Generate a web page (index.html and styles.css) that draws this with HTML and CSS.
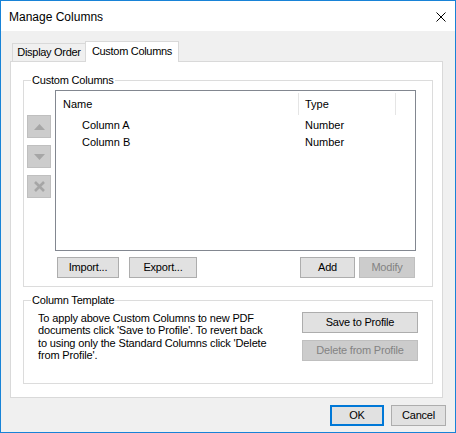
FILE: index.html
```html
<!DOCTYPE html>
<html lang="en">
<head>
<meta charset="utf-8">
<title>Manage Columns</title>
<link rel="stylesheet" href="styles.css">
</head>
<body>
<div class="window">
  <div class="titlebar">
    <span class="title">Manage Columns</span>
    <svg class="close" width="10" height="10" viewBox="0 0 10 10"><path d="M0.5 0.5 L9.5 9.5 M9.5 0.5 L0.5 9.5" stroke="#000" stroke-width="1" fill="none"/></svg>
  </div>
  <div class="client">
    <div class="tabs">
      <div class="tab">Display Order</div>
      <div class="tab active">Custom Columns</div>
    </div>
    <div class="panel">
      <fieldset class="group group-columns">
        <legend>Custom Columns</legend>
        <div class="columns-body">
          <div class="movers">
            <div class="mover"><svg width="11" height="6" viewBox="0 0 11 6"><path d="M5.5 0 L11 6 L0 6 Z" fill="#a6a6a6"/></svg></div>
            <div class="mover"><svg width="11" height="6" viewBox="0 0 11 6"><path d="M0 0 L11 0 L5.5 6 Z" fill="#a6a6a6"/></svg></div>
            <div class="mover"><svg width="11" height="11" viewBox="0 0 11 11"><path d="M1 1 L10 10 M10 1 L1 10" stroke="#a6a6a6" stroke-width="2.6" fill="none"/></svg></div>
          </div>
          <div class="list">
            <div class="list-head">
              <div class="hcell c-name">Name</div>
              <div class="hcell c-type">Type</div>
            </div>
            <div class="rows">
              <div class="row"><div class="cell c-name indent">Column A</div><div class="cell c-type">Number</div></div>
              <div class="row"><div class="cell c-name indent">Column B</div><div class="cell c-type">Number</div></div>
            </div>
          </div>
        </div>
        <div class="list-actions">
          <button class="btn btn-import">Import...</button>
          <button class="btn btn-export">Export...</button>
          <span class="spacer"></span>
          <button class="btn btn-add">Add</button>
          <button class="btn btn-modify" disabled>Modify</button>
        </div>
      </fieldset>
      <fieldset class="group group-template">
        <legend>Column Template</legend>
        <div class="template-body">
          <p class="template-text">To apply above Custom Columns to new PDF<br>documents click 'Save to Profile'. To revert back<br>to using only the Standard Columns click 'Delete<br>from Profile'.</p>
          <div class="profile-btns">
            <button class="btn btn-profile">Save to Profile</button>
            <button class="btn btn-profile" disabled>Delete from Profile</button>
          </div>
        </div>
      </fieldset>
    </div>
    <div class="footer">
      <button class="btn btn-ok">OK</button>
      <button class="btn btn-cancel">Cancel</button>
    </div>
  </div>
</div>
</body>
</html>
```
FILE: styles.css
```css
* { box-sizing: border-box; }
html, body { margin: 0; padding: 0; }
body {
  font-family: "Liberation Sans", Arial, sans-serif;
  font-size: 11px;
  color: #000;
  background: #fff;
}
.window {
  width: 456px;
  height: 433px;
  border: 1px solid #1883d7;
  background: #f0f0f0;
  display: flex;
  flex-direction: column;
}
.titlebar {
  height: 30px;
  background: #fff;
  display: flex;
  align-items: center;
  padding: 2px 9px 0 8px;
  flex: none;
}
.title {
  font-size: 12px;
  flex: 1;
}
.close { display: block; margin-top: -1px; }
.client {
  flex: 1;
  display: flex;
  flex-direction: column;
}
.tabs {
  display: flex;
  align-items: flex-end;
  height: 20px;
  margin: 10px 0 0 11px;
}
.tab {
  height: 18px;
  width: 74px;
  border: 1px solid #d9d9d9;
  border-bottom: none;
  background: #f0f0f0;
  text-align: center;
  line-height: 16px;
  letter-spacing: -0.3px;
}
.tab.active {
  width: 94px;
  height: 21px;
  margin-left: -1px;
  margin-bottom: -1px;
  background: #fff;
  position: relative;
  z-index: 1;
  line-height: 19px;
}
.panel {
  margin-left: 9px;
  width: 433px;
  height: 337px;
  border: 1px solid #d9d9d9;
  background: #fff;
  flex: none;
}
.group {
  margin: 0 0 0 12px;
  padding: 0;
  width: 410px;
  border: 1px solid #dcdcdc;
  min-width: 0;
}
.group legend {
  margin-left: 7px;
  padding: 0 1px;
  line-height: 14px;
  letter-spacing: -0.2px;
}
.group-columns { margin-top: 11px; padding-bottom: 8px; }
.columns-body {
  display: flex;
  padding: 3px 0 0 3px;
}
.movers {
  display: flex;
  flex-direction: column;
  gap: 7px;
  margin-top: 25px;
  width: 24px;
}
.mover {
  width: 24px;
  height: 23px;
  background: #cccccc;
  border: 1px solid #bfbfbf;
  display: flex;
  align-items: center;
  justify-content: center;
}
.mover svg { display: block; }
.list {
  margin-left: 4px;
  width: 361px;
  height: 161px;
  border: 1px solid #828790;
  background: #fff;
}
.list-head {
  height: 25px;
  display: flex;
  padding-top: 2px;
}
.hcell {
  height: 22px;
  line-height: 22px;
  border-right: 1px solid #e5e5e5;
}
.c-name { width: 243px; padding-left: 7px; }
.c-type { width: 97px; padding-left: 6px; }
.rows { padding-top: 1px; }
.row {
  display: flex;
  height: 17px;
  line-height: 17px;
}
.cell.c-name { border-right: 1px solid transparent; }
.cell.indent { padding-left: 26px; }
.list-actions {
  display: flex;
  margin-top: 6px;
  padding: 0 17px 0 33px;
}
.spacer { flex: 1; }
.btn {
  font-family: "Liberation Sans", Arial, sans-serif;
  font-size: 11px;
  color: #000;
  background: #e1e1e1;
  border: 1px solid #adadad;
  height: 21px;
  padding: 0;
  margin: 0;
  line-height: 19px;
  text-align: center;
  letter-spacing: -0.2px;
}
.btn:disabled {
  background: #cccccc;
  border-color: #bfbfbf;
  color: #838383;
}
.btn-import { width: 62px; }
.btn-export { width: 68px; margin-left: 10px; }
.btn-add { width: 55px; }
.btn-modify { width: 56px; margin-left: 4px; }
.group-template { margin-top: 6px; }
.template-body {
  display: flex;
  justify-content: space-between;
  padding: 5px 14px 22px 14px;
}
.template-text {
  margin: 0;
  line-height: 12.3px;
  letter-spacing: -0.15px;
}
.profile-btns {
  display: flex;
  flex-direction: column;
  gap: 7px;
}
.btn-profile { width: 116px; }
.footer {
  display: flex;
  justify-content: flex-end;
  gap: 7px;
  margin-top: 7px;
  padding-right: 9px;
}
.btn-ok { width: 54px; border: 2px solid #0078d7; line-height: 17px; }
.btn-cancel { width: 55px; }
```
